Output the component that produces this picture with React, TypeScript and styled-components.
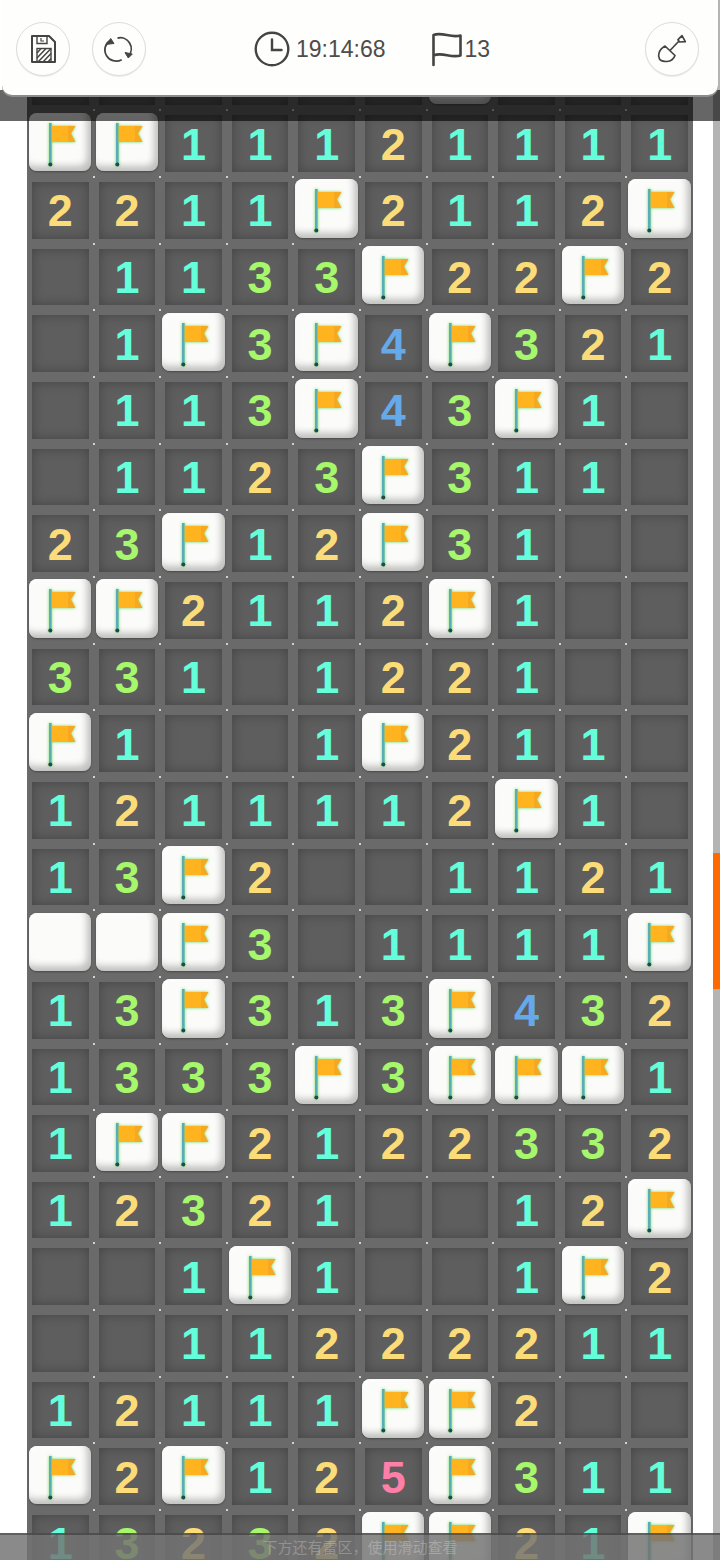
import React from "react";
import styled, { createGlobalStyle } from "styled-components";

const GlobalStyle = createGlobalStyle`
  html, body {
    margin: 0;
    padding: 0;
    background: #fff;
    font-family: "Liberation Sans", "Noto Sans CJK SC", sans-serif;
  }
`;

const BOARD = [
  "......F...",
  "FF11121111",
  "2211F2112F",
  " 1133F22F2",
  " 1F3F4F321",
  " 113F43F1 ",
  " 1123F311 ",
  "23F12F31  ",
  "FF2112F1  ",
  "331 1221  ",
  "F1  1F211 ",
  "1211112F1 ",
  "13F2  1121",
  "UUF3 1111F",
  "13F313F432",
  "1333F3FFF1",
  "1FF2122332",
  "12321  12F",
  "  1F1  1F2",
  "  11222211",
  "12111FF2  ",
  "F2F125F311",
  "13232FF21F",
];

const COLORS: Record<string, string> = {
  "1": "#64ffda",
  "2": "#fbdc78",
  "3": "#a6f76c",
  "4": "#66a9ea",
  "5": "#ff7fa8",
};

const Page = styled.div`
  position: relative;
  display: flex;
  gap: 20px;
  width: 720px;
  height: 1560px;
  padding-left: 27px;
  box-sizing: border-box;
  overflow: hidden;
  background: #fff;
`;

const Board = styled.div`
  display: grid;
  flex: none;
  grid-template-columns: repeat(10, 66.6px);
  grid-auto-rows: 66.67px;
  width: 666px;
  margin-top: 43.67px;
  background: #6a6a6a;
`;

const Cell = styled.div<{ $dot: boolean }>`
  position: relative;
  display: flex;
  align-items: center;
  justify-content: center;

  &::after {
    content: "";
    display: ${({ $dot }) => ($dot ? "block" : "none")};
    position: absolute;
    right: -1px;
    bottom: -1px;
    width: 2px;
    height: 2px;
    border-radius: 50%;
    background: #f4f4f4;
    z-index: 2;
  }
`;

const Opened = styled.div`
  display: flex;
  align-items: center;
  justify-content: center;
  width: 56.6px;
  height: 56.67px;
  background: #5e5e5e;
  box-shadow: inset 0 0 12px rgba(0, 0, 0, 0.28);
`;

const Digit = styled.span<{ $color: string }>`
  color: ${({ $color }) => $color};
  font-size: 45px;
  font-weight: 700;
  line-height: 1;
  margin-top: 1px;
`;

const Raised = styled.div`
  align-self: flex-start;
  width: 62.4px;
  height: 58.4px;
  margin-top: 2.4px;
  border-radius: 8px;
  background: #fbfbf9;
  box-shadow:
    inset -4px -5px 7px rgba(0, 0, 0, 0.24),
    inset 2px 2px 3px rgba(255, 255, 255, 0.9),
    0 1px 2px rgba(50, 50, 50, 0.6);
`;

const FlagArt = styled.svg`
  display: block;
  filter: drop-shadow(0 0 1.5px rgba(100, 215, 70, 0.95));
`;

const Header = styled.header`
  position: absolute;
  top: 0;
  left: 2px;
  right: 2px;
  z-index: 5;
  display: flex;
  align-items: center;
  justify-content: space-between;
  height: 95px;
  padding: 0 19px 0 14px;
  box-sizing: border-box;
  background: #fefefc;
  border-radius: 0 0 10px 10px;
  box-shadow: 0 2px 0 #8c8c8c;
`;

const ButtonGroup = styled.div`
  display: flex;
  gap: 22px;
  margin-top: 2px;
`;

const RoundButton = styled.button`
  display: flex;
  align-items: center;
  justify-content: center;
  width: 54px;
  height: 54px;
  padding: 0;
  border: 1px solid #dddddb;
  border-radius: 50%;
  background: #fefefc;
  box-shadow: 0 1px 1px rgba(0, 0, 0, 0.08);
  color: #444;
`;

const Stats = styled.div`
  position: absolute;
  left: 252px;
  top: 31px;
  display: flex;
  align-items: center;
  gap: 45px;
`;

const Stat = styled.div<{ $gap: number }>`
  display: flex;
  align-items: center;
  gap: ${({ $gap }) => $gap}px;
  color: #4c4c4c;
  font-size: 23px;
  line-height: 36px;
`;

const TopShade = styled.div`
  position: absolute;
  top: 90px;
  left: 0;
  right: 0;
  z-index: 4;
  height: 31px;
  background: rgba(0, 0, 0, 0.6);
`;

const ScrollTrack = styled.div`
  flex: none;
  width: 7px;
  background: #b4b4b4;
`;

const ScrollThumb = styled.div`
  width: 7px;
  height: 136px;
  margin-top: 853px;
  background: #ff6a00;
`;

const BottomHint = styled.div`
  position: absolute;
  left: 0;
  right: 0;
  bottom: 0;
  z-index: 4;
  height: 27px;
  box-sizing: border-box;
  border-top: 2px solid rgba(0, 0, 0, 0.3);
  background: rgba(114, 114, 114, 0.83);
  color: rgba(255, 255, 255, 0.25);
  font-size: 15px;
  line-height: 26px;
  text-align: center;
`;

const FlagIcon = () => (
  <FlagArt width="62" height="58" viewBox="0 0 62 58">
    <rect x="20" y="10" width="2.6" height="42" fill="#58adb8" />
    <circle cx="21.3" cy="51.5" r="2" fill="#1f4a4a" />
    <path d="M22.6 13h23.8l-4.6 7.6 4.6 8.4H22.6z" fill="#ffb41f" />
    <path d="M39 13h7.4l-4.6 7.6 4.6 8.4H39z" fill="#f7a823" />
  </FlagArt>
);

const SaveIcon = () => (
  <svg width="30" height="32" viewBox="0 0 30 32" fill="none" stroke="#444" strokeWidth="2">
    <path d="M4 3h17l6 6v20H4z" strokeLinejoin="round" />
    <path d="M9 3v7.5h10V3" strokeWidth="1.4" />
    <path d="M13 5v3h3" strokeWidth="1.2" />
    <rect x="9" y="15.5" width="14" height="13.5" strokeWidth="1.4" />
    <path d="M9 20l4-4.5M9 25l9-9.5M10 29l13-13.5M15 29l8-8.5M20 29l3-3.5" strokeWidth="1.5" />
  </svg>
);

const RefreshIcon = () => (
  <svg width="30" height="30" viewBox="0 0 30 30" fill="none" stroke="#444" strokeWidth="1.8">
    <path d="M13.5 4.1A11 11 0 0 1 24.5 22" />
    <path d="M17.7 25.7A11 11 0 0 1 6.7 6" />
    <path d="M24.3 24l-3.3-5.5 7.3 1.5z" fill="#444" strokeWidth="1" strokeLinejoin="round" />
    <path d="M6.7 4.5l3.3 5-7 .8z" fill="#444" strokeWidth="1" strokeLinejoin="round" />
  </svg>
);

const ShovelIcon = () => (
  <svg width="30" height="30" viewBox="0 0 30 30" fill="none" stroke="#444" strokeWidth="1.7" strokeLinejoin="round">
    <path d="M8 12l10 9.5q-2 5.5-8 6-6 0-7.5-2.5-1.5-3-.5-6 1-4 6-7z" />
    <path d="M13 16.5L22 7" />
    <path d="M21 5.7L25 1.7l3.3 6-5.8.3z" />
  </svg>
);

const ClockIcon = () => (
  <svg width="36" height="36" viewBox="0 0 36 36" fill="none" stroke="#444" strokeWidth="2.4" strokeLinecap="round">
    <circle cx="18" cy="18" r="16.3" />
    <path d="M18 8.5V19h9.5" />
  </svg>
);

const GameFlagIcon = () => (
  <svg width="32" height="36" viewBox="0 0 32 36" fill="none" stroke="#444" strokeWidth="2.6" strokeLinecap="round" strokeLinejoin="round">
    <path d="M2.5 34V4c9-3.5 17 3.500 27 .5v20c-10 3-18-4-27 0" />
  </svg>
);

const App = () => (
  <Page>
    <GlobalStyle />
    <Board>
      {BOARD.flatMap((row, r) =>
        row.split("").map((ch, c) => (
          <Cell key={`${r}-${c}`} $dot={c < 9}>
            {ch === "F" || ch === "U" ? (
              <Raised>{ch === "F" && r > 0 && <FlagIcon />}</Raised>
            ) : (
              <Opened>{COLORS[ch] && <Digit $color={COLORS[ch]}>{ch}</Digit>}</Opened>
            )}
          </Cell>
        ))
      )}
    </Board>
    <ScrollTrack>
      <ScrollThumb />
    </ScrollTrack>
    <TopShade />
    <Header>
      <ButtonGroup>
        <RoundButton>
          <SaveIcon />
        </RoundButton>
        <RoundButton>
          <RefreshIcon />
        </RoundButton>
      </ButtonGroup>
      <Stats>
        <Stat $gap={6}>
          <ClockIcon />
          19:14:68
        </Stat>
        <Stat $gap={2}>
          <GameFlagIcon />
          13
        </Stat>
      </Stats>
      <ButtonGroup>
        <RoundButton>
          <ShovelIcon />
        </RoundButton>
      </ButtonGroup>
    </Header>
    <BottomHint>下方还有雷区，使用滑动查看</BottomHint>
  </Page>
);

export default App;
